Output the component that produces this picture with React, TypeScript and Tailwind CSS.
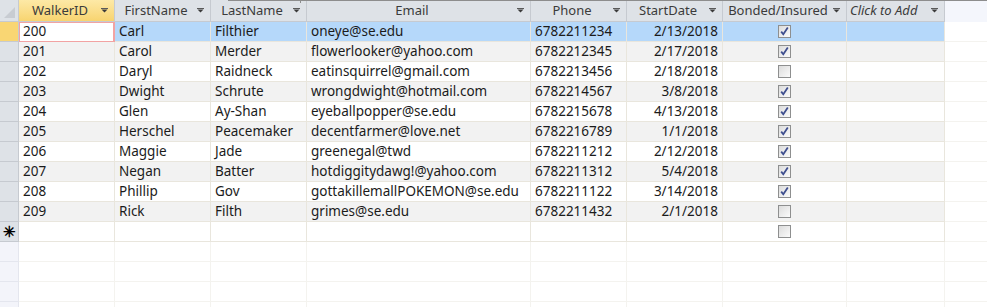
import React from 'react';

type Walker = {
  id: string;
  first: string;
  last: string;
  email: string;
  phone: string;
  start: string;
  bonded: boolean;
};

const walkers: Walker[] = [
  { id: '200', first: 'Carl', last: 'Filthier', email: 'oneye@se.edu', phone: '6782211234', start: '2/13/2018', bonded: true },
  { id: '201', first: 'Carol', last: 'Merder', email: 'flowerlooker@yahoo.com', phone: '6782212345', start: '2/17/2018', bonded: true },
  { id: '202', first: 'Daryl', last: 'Raidneck', email: 'eatinsquirrel@gmail.com', phone: '6782213456', start: '2/18/2018', bonded: false },
  { id: '203', first: 'Dwight', last: 'Schrute', email: 'wrongdwight@hotmail.com', phone: '6782214567', start: '3/8/2018', bonded: true },
  { id: '204', first: 'Glen', last: 'Ay-Shan', email: 'eyeballpopper@se.edu', phone: '6782215678', start: '4/13/2018', bonded: true },
  { id: '205', first: 'Herschel', last: 'Peacemaker', email: 'decentfarmer@love.net', phone: '6782216789', start: '1/1/2018', bonded: true },
  { id: '206', first: 'Maggie', last: 'Jade', email: 'greenegal@twd', phone: '6782211212', start: '2/12/2018', bonded: true },
  { id: '207', first: 'Negan', last: 'Batter', email: 'hotdiggitydawg!@yahoo.com', phone: '6782211312', start: '5/4/2018', bonded: true },
  { id: '208', first: 'Phillip', last: 'Gov', email: 'gottakillemallPOKEMON@se.edu', phone: '6782211122', start: '3/14/2018', bonded: true },
  { id: '209', first: 'Rick', last: 'Filth', email: 'grimes@se.edu', phone: '6782211432', start: '2/1/2018', bonded: false },
];

const Arrow = () => (
  <svg width="7" height="5" viewBox="0 0 7 5" className="shrink-0">
    <rect x="0" y="0" width="7" height="1" fill="#5a5a5a" />
    <path d="M0.5 1.5h6L3.5 4.5z" fill="#3a3a3a" />
  </svg>
);

const CheckBox = ({ checked }: { checked: boolean }) => (
  <div className="w-[13px] h-[13px] border border-[#8e8f8f] bg-gradient-to-br from-[#dcdcdc] to-[#fbfbfb] flex items-center justify-center">
    {checked && (
      <svg width="11" height="11" viewBox="0 0 11 11">
        <path d="M2.2 5.6 L4.3 8.3 L8.8 1.6" fill="none" stroke="#3f4f8f" strokeWidth="1.8" />
      </svg>
    )}
  </div>
);

const HeaderCell = ({ label, w, active, italic }: { label: string; w: string; active?: boolean; italic?: boolean }) => (
  <div
    className={`${w} h-[22px] shrink-0 flex items-center border-r border-b border-[#c6cad0] pr-[6px] text-[13px] ${
      active ? 'bg-gradient-to-b from-[#fde9a6] to-[#f8d46f]' : 'bg-[#dee2e7]'
    }`}
  >
    <span className={`flex-1 text-[#3b3b3b] whitespace-nowrap ${italic ? 'italic pl-[3px] text-left' : 'text-center'}`}>{label}</span>
    <Arrow />
  </div>
);

const cell = 'shrink-0 h-[20px] flex items-center border-r border-b border-[#e9e6dd] px-[4px] whitespace-nowrap overflow-hidden';

export default function App() {
  return (
    <div className="relative w-[987px] h-[307px] bg-white overflow-hidden font-['Noto_Sans',sans-serif] text-[13.5px] leading-none text-[#1b1b1b]">
      {/* window edge peeking in at the top */}
      <div className="absolute left-[228px] right-0 top-0 h-px bg-[#8d8d8d]" />
      <div className="absolute left-[300px] top-0 w-px h-[3px] bg-[#8d8d8d]" />

      {/* header */}
      <div className="flex">
        <div className="w-[19px] h-[22px] shrink-0 bg-[#dee2e7] border-r border-b border-[#c6cad0] flex items-end justify-end p-[3px]">
          <svg width="11" height="11" viewBox="0 0 11 11">
            <path d="M11 0 L11 11 L0 11 Z" fill="#c8ccd2" />
          </svg>
        </div>
        <HeaderCell label="WalkerID" w="w-[96px]" active />
        <HeaderCell label="FirstName" w="w-[96px]" />
        <HeaderCell label="LastName" w="w-[96px]" />
        <HeaderCell label="Email" w="w-[224px]" />
        <HeaderCell label="Phone" w="w-[96px]" />
        <HeaderCell label="StartDate" w="w-[96px]" />
        <HeaderCell label="Bonded/Insured" w="w-[124px]" />
        <HeaderCell label="Click to Add" w="w-[98px]" italic />
        <div className="flex-1 h-[22px] bg-[#f4f6fc]" />
      </div>

      {/* data rows */}
      {walkers.map((r, i) => {
        const selected = i === 0;
        const bg = selected ? 'bg-[#b5d8fa]' : i % 2 === 1 ? 'bg-[#f2f2f2]' : 'bg-white';
        return (
          <div key={r.id} className="flex">
            <div
              className={`w-[19px] h-[20px] shrink-0 border-r border-b border-[#c6cad0] ${
                selected ? 'bg-[#f9d673]' : 'bg-[#dee2e7]'
              }`}
            />
            {selected ? (
              <div className="w-[96px] shrink-0 h-[20px] flex items-center bg-white border border-[#f2a3a3] pl-[3px] border-r-2">
                {r.id}
              </div>
            ) : (
              <div className={`${cell} ${bg} w-[96px]`}>{r.id}</div>
            )}
            <div className={`${cell} ${bg} w-[96px]`}>{r.first}</div>
            <div className={`${cell} ${bg} w-[96px]`}>{r.last}</div>
            <div className={`${cell} ${bg} w-[224px]`}>{r.email}</div>
            <div className={`${cell} ${bg} w-[96px]`}>{r.phone}</div>
            <div className={`${cell} ${bg} w-[96px] justify-end`}>{r.start}</div>
            <div className={`${cell} ${bg} w-[124px] justify-center`}>
              <CheckBox checked={r.bonded} />
            </div>
            <div className={`${cell} ${bg} w-[98px]`} />
            <div className="flex-1 h-[20px] border-b border-[#f4f3ef]" />
          </div>
        );
      })}

      {/* new record row */}
      <div className="flex">
        <div className="w-[19px] h-[20px] shrink-0 border-r border-b border-[#c6cad0] bg-[#dee2e7] flex items-center justify-center text-[15px] font-bold text-black">
          ✳
        </div>
        <div className={`${cell} w-[96px]`} />
        <div className={`${cell} w-[96px]`} />
        <div className={`${cell} w-[96px]`} />
        <div className={`${cell} w-[224px]`} />
        <div className={`${cell} w-[96px]`} />
        <div className={`${cell} w-[96px]`} />
        <div className={`${cell} w-[124px] justify-center`}>
          <CheckBox checked={false} />
        </div>
        <div className={`${cell} w-[98px]`} />
        <div className="flex-1 h-[20px] border-b border-[#f4f3ef]" />
      </div>

      {/* empty grid below */}
      {[0, 1, 2, 3].map((k) => (
        <div key={k} className="flex">
          <div className="w-[19px] h-[20px] shrink-0 bg-[#f3f4fa] border-r border-b border-[#e4e6ee]" />
          {['w-[96px]', 'w-[96px]', 'w-[96px]', 'w-[224px]', 'w-[96px]', 'w-[96px]', 'w-[124px]', 'w-[98px]'].map((w, j) => (
            <div key={j} className={`${w} h-[20px] shrink-0 border-r border-b border-[#f4f3ef]`} />
          ))}
          <div className="flex-1 h-[20px] border-b border-[#f4f3ef]" />
        </div>
      ))}
    </div>
  );
}
